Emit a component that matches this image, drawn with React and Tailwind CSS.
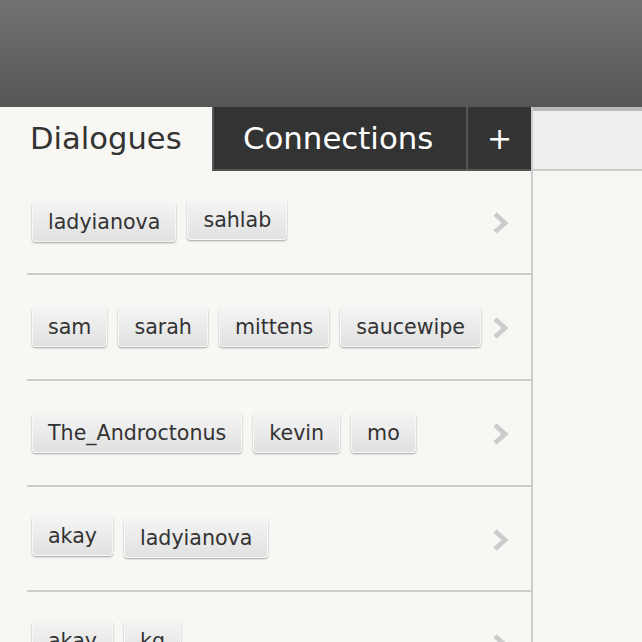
import React from 'react';

const dialogues = [
    { h: 'h-[104px]', pad: 'pt-[29px]', tags: [{ name: 'ladyianova', shift: 'mt-[2px]' }, { name: 'sahlab' }] },
    { h: 'h-[106px]', pad: 'pt-[32px]', tags: [{ name: 'sam' }, { name: 'sarah' }, { name: 'mittens' }, { name: 'saucewipe' }] },
    { h: 'h-[106px]', pad: 'pt-[32px]', tags: [{ name: 'The_Androctonus' }, { name: 'kevin' }, { name: 'mo' }] },
    { h: 'h-[105px]', pad: 'pt-[29px]', tags: [{ name: 'akay' }, { name: 'ladyianova', shift: 'mt-[2px]' }] },
    { h: 'h-[106px]', pad: 'pt-[29px]', tags: [{ name: 'akay' }, { name: 'kg' }] },
];

const Chevron = () => (
    <svg width="17" height="24" viewBox="0 0 17 24" className="shrink-0">
        <polyline points="3,3 13,12 3,21" fill="none" stroke="#cccccc" strokeWidth="4.8" strokeLinejoin="miter" />
    </svg>
);

const Tag = ({ name, shift }) => (
    <span className={`${shift || ''} inline-block px-[15px] h-[40px] leading-[39px] text-[20.6px] text-[#333] rounded-[4px] border border-[#f7f7f7] bg-gradient-to-b from-[#f4f4f4] to-[#e1e1e1] shadow-[0_1px_2px_rgba(0,0,0,0.35)] whitespace-nowrap`}>
        {name}
    </span>
);

const App = () => {
    return (
        <div className="h-[642px] overflow-hidden bg-[#f8f7f4] font-['DejaVu_Sans',sans-serif]">
            <div className="h-[107px] bg-gradient-to-b from-[#727272] to-[#565656]" />
            <div className="flex">
                <div className="w-[531px] shrink-0">
                    <div className="flex h-[64px]">
                        <div className="w-[212px] pl-[30px] flex items-center text-[30.6px] text-[#333]">Dialogues</div>
                        <div className="w-[254px] bg-[#333] border-l-2 border-b-2 border-[#555] flex items-center pl-[29px] text-[30.8px] text-white">Connections</div>
                        <div className="w-[65px] bg-[#333] border-l-2 border-b-2 border-[#555] flex items-center justify-center text-[30px] text-white">+</div>
                    </div>
                    <div className="ml-[27px]">
                        {dialogues.map((row, i) => (
                            <div key={i} className={`flex border-b-2 border-[#ccc] pr-[22px] ${row.h}`}>
                                <div className={`flex-1 flex items-start gap-[11px] pl-[5px] ${row.pad}`}>
                                    {row.tags.map((t, j) => <Tag key={j} name={t.name} shift={t.shift} />)}
                                </div>
                                <div className="flex items-center pt-[2px]">
                                    <Chevron />
                                </div>
                            </div>
                        ))}
                    </div>
                </div>
                <div className="flex-1 border-l-2 border-[#ccc] min-h-[535px]">
                    <div className="h-[64px] bg-[#eee] border-t-4 border-[#bbb] border-b-2 border-b-[#ccc]" />
                </div>
            </div>
        </div>
    );
};

export default App;
